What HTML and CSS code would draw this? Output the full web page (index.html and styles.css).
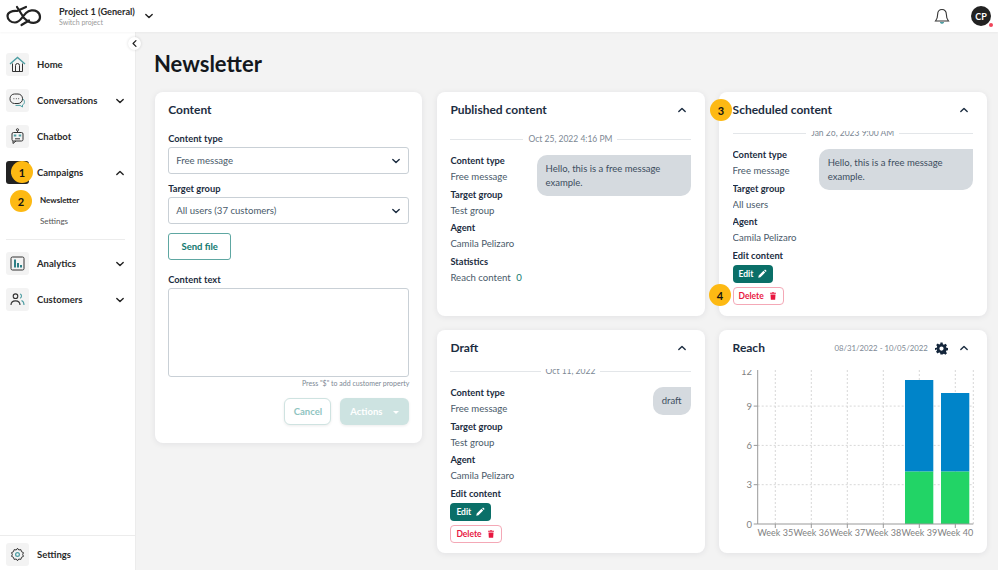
FILE: index.html
```html
<!DOCTYPE html>
<html lang="en">
<head>
  <meta charset="UTF-8" />
  <title>Newsletter</title>
  <link rel="stylesheet" href="styles.css">
</head>
<body>
  <svg class="sprites" width="0" height="0">
    <symbol id="chev" viewBox="0 0 10 10"><path d="M1.800 3.400 5 6.600l3.200-3.200" fill="none" stroke="currentColor" stroke-width="1.400" stroke-linecap="round" stroke-linejoin="round"/></symbol>
    <symbol id="pencil" viewBox="0 0 12 12"><path d="M1.500 10.500l.6-2.600 5.700-5.700 2 2-5.700 5.700zM8.500 1.500l.7-.5a.8.8 0 0 1 1 0l.9.9a.8.8 0 0 1 0 1l-.6.7z" fill="currentColor"/></symbol>
    <symbol id="trash" viewBox="0 0 12 12"><path d="M2.500 2.200h2l.5-.8h2l.5.8h2v1.200h-7zM3 4.200h6l-.4 6.400H3.400z" fill="currentColor"/></symbol>
  </svg>

  <header class="topbar">
    <svg class="logo" width="36" height="22" viewBox="0 0 36 22">
      <path d="M20 2 11 6C6 5.500 1.500 7.500 1.500 11 1.500 15 5 17.500 9 17.500 14 17.500 16 12 20 8 23 5 28 4.500 31 6.500 35 9 35 15 31 17 27 19 22 17 18 13L11 2M15.500 20 23 15.500" fill="none" stroke="#222" stroke-width="2.200" stroke-linecap="round" stroke-linejoin="round"/>
    </svg>
    <div class="project">
      <div class="project-name">Project 1 (General)</div>
      <div class="project-sub">Switch project</div>
    </div>
    <svg class="chev project-chev"><use href="#chev"/></svg>
    <div class="topbar-right">
      <svg class="bell" width="16" height="17" viewBox="0 0 16 17">
        <path d="M8 1.500c-2.800 0-4.300 2-4.300 4.500 0 3.500-1 5.500-2.200 7h13c-1.200-1.500-2.200-3.500-2.200-7 0-2.500-1.500-4.500-4.300-4.500z" fill="none" stroke="#333" stroke-width="1.100"/>
        <path d="M6.200 14.500c.4 1 3.200 1 3.600 0z" fill="#4e9ea3" stroke="#4e9ea3"/>
      </svg>
      <div class="avatar">CP<span class="avatar-dot"></span></div>
    </div>
  </header>

  <div class="layout">
    <aside class="sidebar">
      <button class="collapse"><svg class="chev chev-left"><use href="#chev"/></svg></button>
      <nav class="nav">
        <div class="nav-item">
          <span class="tile">
            <svg width="17" height="17" viewBox="0 0 17 17" fill="none" stroke="#333"><path d="M3.500 7.500V15.500H13.500V7.500M6.500 15.500V9.500a2 2 0 0 1 4 0v6"/><path d="M1 8 8.500 1.500 16 8" stroke="#4e9ea3" stroke-width="1.400"/></svg>
          </span>
          <span class="nav-label">Home</span>
        </div>
        <div class="nav-item">
          <span class="tile">
            <svg width="17" height="15" viewBox="0 0 17 15" fill="none"><path d="M13.300 5.500c2.600 1.200 3 5.200.2 6.500v2l-2.500-1.600H6.500" stroke="#4e9ea3"/><rect x="1" y="1" width="12.500" height="9.500" rx="4.500" stroke="#333"/><path d="M4.500 5.700h.8M6.900 5.700h.8M9.300 5.700h.8" stroke="#333"/></svg>
          </span>
          <span class="nav-label">Conversations</span>
          <svg class="chev nav-chev"><use href="#chev"/></svg>
        </div>
        <div class="nav-item">
          <span class="tile">
            <svg width="15" height="17" viewBox="0 0 15 17" fill="none"><circle cx="7.500" cy="1.800" r="1.100" stroke="#333"/><path d="M7.500 3v1.500" stroke="#333"/><rect x="2" y="4.500" width="11" height="8.500" rx="1.500" stroke="#333"/><rect x="3.800" y="6.500" width="2.500" height="2" fill="#4e9ea3"/><rect x="8.700" y="6.500" width="2.500" height="2" fill="#4e9ea3"/><path d="M5 10.800h5M3 13v2.500L6 13" stroke="#333"/></svg>
          </span>
          <span class="nav-label">Chatbot</span>
        </div>
        <div class="nav-item">
          <span class="tile tile-dark">
            <svg width="15" height="15" viewBox="0 0 15 15" fill="none" stroke="#fff"><path d="M2 6v3l9 3V3z"/></svg>
          </span>
          <span class="nav-label">Campaigns</span>
          <svg class="chev nav-chev chev-up"><use href="#chev"/></svg>
        </div>
        <div class="subnav">
          <div class="sub-item sub-active">Newsletter</div>
          <div class="sub-item">Settings</div>
        </div>
        <div class="nav-divider"></div>
        <div class="nav-item">
          <span class="tile">
            <svg width="15" height="15" viewBox="0 0 15 15" fill="none"><rect x="1" y="1" width="13" height="13" rx="1.500" stroke="#333"/><path d="M4 3.500h2v8H4zM7 7h2v4.500H7zM10 9h2v2.500h-2z" fill="#2e7f86"/></svg>
          </span>
          <span class="nav-label">Analytics</span>
          <svg class="chev nav-chev"><use href="#chev"/></svg>
        </div>
        <div class="nav-item">
          <span class="tile">
            <svg width="15" height="15" viewBox="0 0 15 15" fill="none" stroke-width="1.100"><circle cx="5.500" cy="4.200" r="2.300" stroke="#333"/><path d="M1 13c0-5.500 9-5.500 9 0" stroke="#333"/><path d="M10 2c2 .3 2 3.800 0 4.200M11.500 8.500c1.500.6 2.500 2.300 2.500 4.500" stroke="#4e9ea3"/></svg>
          </span>
          <span class="nav-label">Customers</span>
          <svg class="chev nav-chev"><use href="#chev"/></svg>
        </div>
      </nav>
      <div class="sidebar-foot">
        <div class="nav-item">
          <span class="tile">
            <svg width="15" height="15" viewBox="0 0 24 24" fill="none"><path d="M12 2l2 2.800 3.400-.6 1 3.300 3.100 1.500-1.200 3 1.200 3-3.100 1.500-1 3.300-3.400-.6L12 22l-2-2.800-3.400.6-1-3.300-3.100-1.500 1.200-3-1.200-3 3.100-1.500 1-3.300 3.400.6z" stroke="#333" stroke-width="1.600"/><circle cx="12" cy="12" r="3" stroke="#4e9ea3" stroke-width="2"/></svg>
          </span>
          <span class="nav-label">Settings</span>
        </div>
      </div>
    </aside>

    <main class="main">
      <h1 class="page-title">Newsletter</h1>
      <div class="cards">
        <section class="card card-form">
          <h2 class="card-title">Content</h2>
          <label class="field-label">Content type</label>
          <div class="select">Free message<svg class="chev"><use href="#chev"/></svg></div>
          <label class="field-label">Target group</label>
          <div class="select">All users (37 customers)<svg class="chev"><use href="#chev"/></svg></div>
          <button class="btn-outline">Send file</button>
          <label class="field-label field-label-text">Content text</label>
          <div class="textarea"></div>
          <div class="hint">Press "$" to add customer property</div>
          <div class="form-actions">
            <button class="btn-cancel">Cancel</button>
            <button class="btn-actions">Actions<span class="caret"></span></button>
          </div>
        </section>

        <section class="card">
          <div class="card-head">
            <h2 class="card-title">Published content</h2>
            <svg class="chev chev-up"><use href="#chev"/></svg>
          </div>
          <div class="card-body">
            <div class="date-row"><span>Oct 25, 2022 4:16 PM</span></div>
            <div class="detail-wrap">
              <div class="details">
                <div class="d-label">Content type</div>
                <div class="d-value">Free message</div>
                <div class="d-label">Target group</div>
                <div class="d-value">Test group</div>
                <div class="d-label">Agent</div>
                <div class="d-value">Camila Pelizaro</div>
                <div class="d-label">Statistics</div>
                <div class="d-value">Reach content <span class="stat">0</span></div>
              </div>
              <div class="bubble">Hello, this is a free message example.</div>
            </div>
          </div>
        </section>

        <section class="card">
          <div class="card-head">
            <h2 class="card-title">Scheduled content</h2>
            <svg class="chev chev-up"><use href="#chev"/></svg>
          </div>
          <div class="card-body scrolled">
            <div class="date-row"><span>Jan 26, 2023 9:00 AM</span></div>
            <div class="detail-wrap">
              <div class="details">
                <div class="d-label">Content type</div>
                <div class="d-value">Free message</div>
                <div class="d-label">Target group</div>
                <div class="d-value">All users</div>
                <div class="d-label">Agent</div>
                <div class="d-value">Camila Pelizaro</div>
                <div class="d-label">Edit content</div>
                <button class="btn-edit">Edit<svg class="btn-icon"><use href="#pencil"/></svg></button>
                <button class="btn-delete">Delete<svg class="btn-icon"><use href="#trash"/></svg></button>
              </div>
              <div class="bubble">Hello, this is a free message example.</div>
            </div>
          </div>
        </section>

        <section class="card">
          <div class="card-head">
            <h2 class="card-title">Draft</h2>
            <svg class="chev chev-up"><use href="#chev"/></svg>
          </div>
          <div class="card-body scrolled">
            <div class="date-row"><span>Oct 11, 2022</span></div>
            <div class="detail-wrap">
              <div class="details">
                <div class="d-label">Content type</div>
                <div class="d-value">Free message</div>
                <div class="d-label">Target group</div>
                <div class="d-value">Test group</div>
                <div class="d-label">Agent</div>
                <div class="d-value">Camila Pelizaro</div>
                <div class="d-label">Edit content</div>
                <button class="btn-edit">Edit<svg class="btn-icon"><use href="#pencil"/></svg></button>
                <button class="btn-delete">Delete<svg class="btn-icon"><use href="#trash"/></svg></button>
              </div>
              <div class="bubble">draft</div>
            </div>
          </div>
        </section>

        <section class="card">
          <div class="card-head">
            <h2 class="card-title">Reach</h2>
            <span class="range">08/31/2022 - 10/05/2022</span>
            <svg class="gear" width="13" height="13" viewBox="0 0 24 24"><path fill-rule="evenodd" d="M10 1h4l.6 3.200 2 .8L19.300 3.200l2.800 2.800-1.800 2.700.8 2 3.200.6v4l-3.200.6-.8 2 1.800 2.700-2.800 2.800-2.700-1.800-2 .8L14 23.200h-4l-.6-3.200-2-.8-2.700 1.800-2.800-2.800 1.800-2.700-.8-2L0 15v-4l3.200-.6.8-2L2.200 5.700 5 2.900l2.700 1.800 2-.8zM12 8.200a3.900 3.900 0 1 0 0 7.800 3.900 3.900 0 0 0 0-7.800z" fill="#14263b"/></svg>
            <svg class="chev chev-up"><use href="#chev"/></svg>
          </div>
          <svg class="chart" width="242" height="170" viewBox="0 0 242 170">
            <g class="grid">
              <path d="M42.300 0V154M78.300 0V154M114.300 0V154M150.300 0V154M186.300 0V154M222.300 0V154M240.300 0V154"/>
              <path d="M24.700 36.100H240.300M24.700 75.400H240.300M24.700 114.700H240.300"/>
            </g>
            <rect class="bar-blue" x="172" y="10" width="28.300" height="91.600"/>
            <rect class="bar-green" x="172" y="101.600" width="28.300" height="52.400"/>
            <rect class="bar-blue" x="208" y="23" width="28.300" height="78.600"/>
            <rect class="bar-green" x="208" y="101.600" width="28.300" height="52.400"/>
            <path class="axis" d="M24.700 0V154H240.300M20.700 36.100h4M20.700 75.400h4M20.700 114.700h4M20.700 154h4M42.300 154v4M78.300 154v4M114.300 154v4M150.300 154v4M186.300 154v4M222.300 154v4"/>
            <g class="y-labels">
              <text x="19" y="4.500">12</text>
              <text x="19" y="39.800">9</text>
              <text x="19" y="79">6</text>
              <text x="19" y="118.300">3</text>
              <text x="19" y="157.600">0</text>
            </g>
            <g class="x-labels">
              <text x="42.300" y="165.500">Week 35</text>
              <text x="78.300" y="165.500">Week 36</text>
              <text x="114.300" y="165.500">Week 37</text>
              <text x="150.300" y="165.500">Week 38</text>
              <text x="186.300" y="165.500">Week 39</text>
              <text x="222.300" y="165.500">Week 40</text>
            </g>
          </svg>
        </section>
      </div>
    </main>
  </div>

  <!-- numbered callouts on top of the screenshot -->
  <span class="callout callout-1">1</span>
  <span class="callout callout-2">2</span>
  <span class="callout callout-3">3</span>
  <span class="callout callout-4">4</span>
</body>
</html>
```

FILE: styles.css
```css
* {
  box-sizing: border-box;
}

html, body {
  height: 100%;
}

body {
  margin: 0;
  overflow: hidden;
  position: relative;
  background: #f3f3f3;
  font-family: 'Lato', sans-serif;
  color: #1c2d41;
}

button {
  font-family: inherit;
  cursor: pointer;
}

.sprites {
  position: absolute;
}

.chev {
  width: 10px;
  height: 10px;
  color: #1c2d41;
  flex: none;
}

.chev-up {
  transform: rotate(180deg);
}

.chev-left {
  transform: rotate(90deg);
}

/* top bar */
.topbar {
  height: 32px;
  background: #fff;
  display: flex;
  align-items: center;
  padding: 0 7px 0 6px;
  box-shadow: 0 1px 2px rgba(0, 0, 0, 0.04);
  position: relative;
  z-index: 2;
}

.logo {
  flex: none;
}

.project {
  margin-left: 17px;
  width: 75px;
  white-space: nowrap;
}

.project-name {
  font-size: 9.200px;
  font-weight: 700;
  color: #2a2a2a;
  line-height: 12px;
}

.project-sub {
  font-size: 7px;
  color: #9a9a9a;
  line-height: 9px;
}

.project-chev {
  margin-left: 10px;
  color: #222;
}

.topbar-right {
  margin-left: auto;
  display: flex;
  align-items: center;
  gap: 21px;
}

.avatar {
  width: 20px;
  height: 20px;
  border-radius: 50%;
  background: #222;
  color: #fff;
  font-size: 9px;
  font-weight: 700;
  display: flex;
  align-items: center;
  justify-content: center;
  position: relative;
}

.avatar-dot {
  position: absolute;
  right: -2px;
  bottom: -1px;
  width: 4px;
  height: 4px;
  border-radius: 50%;
  background: #f0455a;
}

/* sidebar */
.layout {
  display: flex;
  height: 538px;
}

.sidebar {
  width: 136px;
  flex: none;
  background: #fff;
  border-right: 1px solid #ececec;
  display: flex;
  flex-direction: column;
  position: relative;
}

.collapse {
  position: absolute;
  top: 5px;
  right: -6px;
  width: 13px;
  height: 13px;
  border-radius: 50%;
  border: none;
  background: #fff;
  box-shadow: 0 0 3px rgba(0, 0, 0, 0.15);
  padding: 0;
  display: flex;
  align-items: center;
  justify-content: center;
}

.collapse .chev {
  width: 9px;
  height: 9px;
  color: #222;
}

.nav {
  padding: 21px 10px 0 6px;
  display: flex;
  flex-direction: column;
  gap: 13px;
}

.nav-item {
  display: flex;
  align-items: center;
  height: 23px;
}

.tile {
  width: 23px;
  height: 23px;
  border-radius: 3px;
  background: #f3f3f3;
  display: flex;
  align-items: center;
  justify-content: center;
  flex: none;
}

.tile-dark {
  background: #222;
}

.nav-label {
  margin-left: 8px;
  font-size: 9.500px;
  font-weight: 700;
  color: #2a2a2a;
}

.nav-chev {
  margin-left: auto;
  color: #222;
}

.subnav {
  margin-top: -2px;
  padding-left: 34px;
  display: flex;
  flex-direction: column;
  gap: 10px;
}

.sub-item {
  font-size: 8px;
  line-height: 11px;
  color: #555;
}

.sub-active {
  font-weight: 700;
  color: #222;
}

.nav-divider {
  height: 1px;
  background: #ececec;
  margin-top: -1px;
  margin-bottom: -1px;
}

.sidebar-foot {
  margin-top: auto;
  border-top: 1px solid #ececec;
  padding: 7px 10px 4px 6px;
}

/* main */
.main {
  flex: 1;
  padding: 0 0 0 18px;
}

.page-title {
  margin: 17px 0 13px;
  font-size: 22px;
  line-height: 30px;
  font-weight: 700;
  color: #14181d;
}

.cards {
  display: grid;
  grid-template-columns: repeat(3, 267.700px);
  grid-template-rows: 224px 223px;
  gap: 14px 14.500px;
  margin-left: 0.700px;
}

.card {
  background: #fff;
  border-radius: 8px;
  box-shadow: 0 1px 6px rgba(20, 30, 50, 0.08);
  padding: 0 14px 0 13.500px;
  overflow: hidden;
}

.card-form {
  grid-row: span 2;
  align-self: start;
  height: 351px;
  padding-top: 10px;
  padding-right: 13px;
}

.card-head {
  height: 38px;
  display: flex;
  align-items: center;
  padding-bottom: 2px;
}

.card-head > .chev {
  margin-left: auto;
  margin-right: 4px;
}

.card-title {
  margin: 0;
  font-size: 12px;
  line-height: 16px;
  font-weight: 700;
  color: #1c2d41;
}

.range {
  margin-left: auto;
  font-size: 7.800px;
  color: #7d8894;
}

.gear {
  margin-left: 7px;
}

.card-head .range + .gear + .chev {
  margin-left: 11px;
}

/* content form */
.field-label {
  display: block;
  font-size: 9.300px;
  font-weight: 700;
  line-height: 12px;
  margin: 15px 0 2px;
}

.card-form .select + .field-label {
  margin-top: 9px;
}

.select {
  height: 27px;
  border: 1px solid #c9d0d6;
  border-radius: 3px;
  font-size: 9.600px;
  color: #4a5a6a;
  padding: 0 7px;
  display: flex;
  align-items: center;
  justify-content: space-between;
}

.btn-outline {
  display: block;
  width: 63px;
  height: 27px;
  margin-top: 9px;
  background: #fff;
  border: 1px solid #5ea7a2;
  border-radius: 3px;
  color: #11786f;
  font-size: 9.500px;
  font-weight: 700;
}

.field-label-text {
  margin-top: 14px;
}

.textarea {
  height: 89px;
  border: 1px solid #c9d0d6;
  border-radius: 3px;
}

.hint {
  text-align: right;
  font-size: 7px;
  line-height: 12px;
  color: #7d8894;
}

.form-actions {
  margin-top: 9px;
  display: flex;
  justify-content: flex-end;
  gap: 9px;
}

.btn-cancel {
  width: 47px;
  height: 27px;
  background: #fff;
  border: 1px solid #cfe3e1;
  border-radius: 6px;
  color: #8fc4bf;
  font-size: 9.500px;
  font-weight: 700;
  box-shadow: 0 1px 3px rgba(0, 0, 0, 0.08);
}

.btn-actions {
  width: 69px;
  height: 27px;
  background: #cde3e1;
  border: none;
  border-radius: 6px;
  color: #fff;
  font-size: 9.500px;
  font-weight: 700;
  box-shadow: 0 1px 3px rgba(0, 0, 0, 0.08);
}

.caret {
  display: inline-block;
  margin-left: 11px;
  vertical-align: middle;
  border: 3px solid transparent;
  border-top-color: #fff;
  border-bottom: none;
}

/* content cards */
.card-body {
  height: 186px;
  overflow: hidden;
}

.card-body.scrolled {
  margin-top: 1px;
  height: 185px;
}

.date-row {
  margin-top: 3px;
  display: flex;
  align-items: center;
  gap: 5px;
  font-size: 8.500px;
  line-height: 12px;
  color: #7d8894;
  white-space: nowrap;
}

.date-row::before,
.date-row::after {
  content: "";
  flex: 1;
  height: 1px;
  background: #e3e6e9;
}

.scrolled .date-row {
  margin-top: -4px;
}

.detail-wrap {
  margin-top: 8px;
  display: flex;
  justify-content: space-between;
  align-items: flex-start;
}

.details {
  flex: none;
}

.d-label {
  font-size: 9.300px;
  line-height: 16px;
  font-weight: 700;
  color: #1c2d41;
}

.d-value {
  font-size: 9.600px;
  line-height: 16px;
  margin-bottom: 1.700px;
  color: #4a5a6a;
}

.stat {
  margin-left: 3px;
  color: #11786f;
}

.bubble {
  margin-top: 2px;
  width: fit-content;
  max-width: 154px;
  padding: 7px 9px;
  background: #d5dadf;
  border-radius: 10px 0 10px 10px;
  font-size: 9.500px;
  line-height: 13.500px;
  color: #3c4d5e;
}

.btn-edit,
.btn-delete {
  display: flex;
  align-items: center;
  gap: 4px;
  height: 18px;
  border-radius: 4px;
  font-size: 8.500px;
  font-weight: 700;
}

.btn-edit {
  margin-top: 1px;
  padding: 0 6px;
  background: #0a6f68;
  color: #fff;
  border: none;
}

.btn-delete {
  margin-top: 4px;
  padding: 0 5px;
  background: #fff;
  border: 1px solid #f4a8b6;
  color: #e8173f;
}

.btn-icon {
  width: 10px;
  height: 10px;
}

/* chart */
.chart {
  display: block;
  margin-top: 2px;
  overflow: hidden;
}

.grid path {
  fill: none;
  stroke: #d8d8d8;
  stroke-width: 1;
  stroke-dasharray: 2 2;
}

.axis {
  fill: none;
  stroke: #999;
  stroke-width: 1;
}

.bar-blue {
  fill: #0084c9;
}

.bar-green {
  fill: #22d466;
}

.y-labels text {
  font-size: 9.500px;
  fill: #7f7f7f;
  text-anchor: end;
}

.x-labels text {
  font-size: 9px;
  fill: #7f7f7f;
  text-anchor: middle;
}

/* numbered callouts */
.callout {
  position: absolute;
  width: 22px;
  height: 22px;
  border-radius: 50%;
  background: #fdb913;
  color: #111;
  font-size: 11px;
  font-weight: 700;
  display: flex;
  align-items: center;
  justify-content: center;
  z-index: 5;
}

.callout-1 {
  left: 11px;
  top: 161px;
}

.callout-2 {
  left: 10px;
  top: 190px;
}

.callout-3 {
  left: 710px;
  top: 99px;
}

.callout-4 {
  left: 709px;
  top: 284px;
}
```
